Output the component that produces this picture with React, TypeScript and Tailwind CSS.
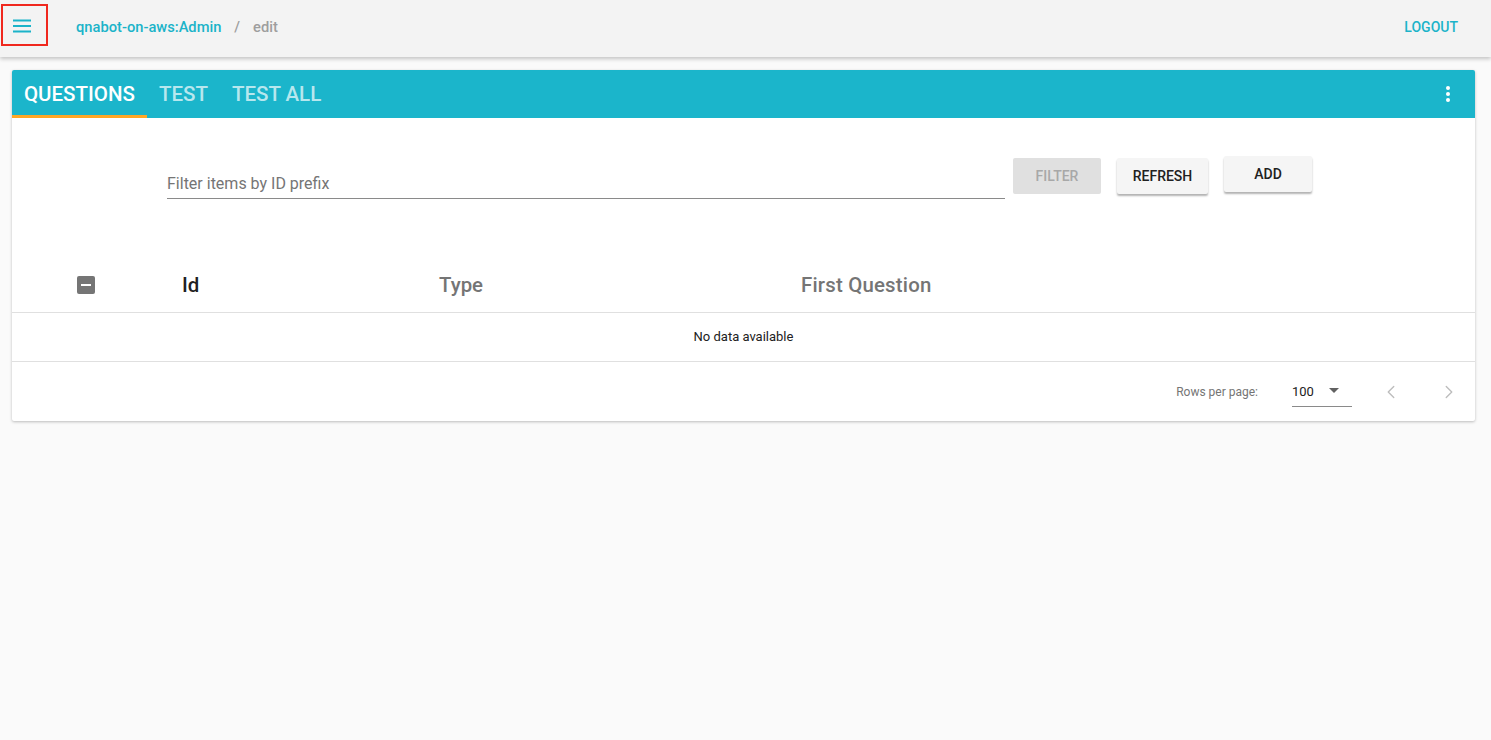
import { ChevronLeft, ChevronRight } from 'lucide-react'

function Menu() {
  return (
    <svg width="18" height="14" viewBox="0 0 18 14" className="text-[#1bb3c9]">
      <rect x="0" y="0.5" width="18" height="2" fill="currentColor" />
      <rect x="0" y="6" width="18" height="2" fill="currentColor" />
      <rect x="0" y="11.5" width="18" height="2" fill="currentColor" />
    </svg>
  )
}

function Dots() {
  return (
    <svg width="6" height="18" viewBox="0 0 6 18">
      <circle cx="3" cy="3" r="2" fill="#fff" />
      <circle cx="3" cy="9" r="2" fill="#fff" />
      <circle cx="3" cy="15" r="2" fill="#fff" />
    </svg>
  )
}

export default function App() {
  return (
    <div className="min-h-screen bg-[#fafafa] font-['Roboto',sans-serif] text-[#212121]">
      <header className="h-[57px] bg-[#f3f3f3] shadow-[0_2px_4px_rgba(0,0,0,0.22)] flex items-center relative z-10">
        <div className="self-start ml-[1px] mt-[4px] w-[47px] h-[42px] border-2 border-[#f0281e] flex items-center pl-[10px] pt-[2px]">
          <Menu />
        </div>
        <div className="ml-[28px] -mt-[2px] flex items-center text-[14.7px] font-medium">
          <span className="text-[#1bb3c9]">qnabot-on-aws:Admin</span>
          <span className="mx-[13px] text-[#9e9e9e]">/</span>
          <span className="text-[#9e9e9e]">edit</span>
        </div>
        <div className="ml-auto mr-[33px] -mt-[2px] text-[14px] font-medium text-[#1bb3c9]">LOGOUT</div>
      </header>

      <div className="ml-[12px] mr-[16px] mt-[13px] bg-white shadow-[0_1px_3px_rgba(0,0,0,0.25)] rounded-[2px]">
        <div className="h-[48px] bg-[#1bb5cb] flex items-stretch rounded-t-[2px]">
          <div className="px-3 flex items-center text-[20.5px] font-medium text-white border-b-[3px] border-[#ffa726] pt-[3px]">QUESTIONS</div>
          <div className="px-3 flex items-center text-[20.5px] font-medium text-white/70">TEST</div>
          <div className="px-3 flex items-center text-[20.5px] font-medium text-white/70">TEST ALL</div>
          <div className="ml-auto mr-[24px] flex items-center"><Dots /></div>
        </div>

        <div className="h-[139px] flex items-start">
          <div className="ml-[155px] w-[838px] mt-[53px] border-b border-[#8a8a8a] h-[28px] text-[16px] text-[#757575] flex items-end pb-[2px]">
            Filter items by ID prefix
          </div>
          <button className="ml-[8px] mt-[40px] w-[88px] h-[36px] bg-[#e0e0e0] rounded-[2px] text-[14px] font-medium text-[#a8a8a8]">FILTER</button>
          <button className="ml-[16px] mt-[40px] w-[91px] h-[36px] bg-[#f5f5f5] rounded-[2px] text-[14px] font-medium text-[#212121] shadow-[0_2px_2px_rgba(0,0,0,0.3)]">REFRESH</button>
          <button className="ml-[16px] mt-[38px] w-[88px] h-[36px] bg-[#f5f5f5] rounded-[2px] text-[14px] font-medium text-[#212121] shadow-[0_2px_2px_rgba(0,0,0,0.3)]">ADD</button>
        </div>

        <div className="h-[56px] flex items-center border-b border-[#e0e0e0]">
          <div className="w-[170px] pl-[65px]">
            <div className="w-[18px] h-[18px] rounded-[2px] bg-[#757575] flex items-center justify-center">
              <div className="w-[10px] h-[2px] bg-white" />
            </div>
          </div>
          <div className="w-[257px] pt-[2px] text-[20.4px] font-medium text-[#212121]">Id</div>
          <div className="w-[362px] pt-[2px] text-[20.4px] font-medium text-[#757575]">Type</div>
          <div className="pt-[2px] text-[20.4px] font-medium text-[#757575] tracking-[0.2px]">First Question</div>
        </div>

        <div className="h-[49px] flex items-center justify-center border-b border-[#e0e0e0] text-[13px] text-[#212121]">
          No data available
        </div>

        <div className="h-[59px] flex items-center text-[12px] text-[#757575]">
          <span className="ml-auto">Rows per page:</span>
          <div className="ml-[34px] w-[60px] h-[30px] border-b border-[#8a8a8a] flex items-start pt-[5px] text-[13px] text-[#212121]">
            <span>100</span>
            <svg width="10" height="5" viewBox="0 0 10 5" className="ml-auto mr-[13px] mt-[6px]"><path d="M0 0h10L5 5z" fill="#616161" /></svg>
          </div>
          <ChevronLeft className="ml-[28px] text-[#bdbdbd]" size={22} strokeWidth={1.5} />
          <ChevronRight className="ml-[36px] mr-[15px] text-[#bdbdbd]" size={22} strokeWidth={1.5} />
        </div>
      </div>
    </div>
  )
}
